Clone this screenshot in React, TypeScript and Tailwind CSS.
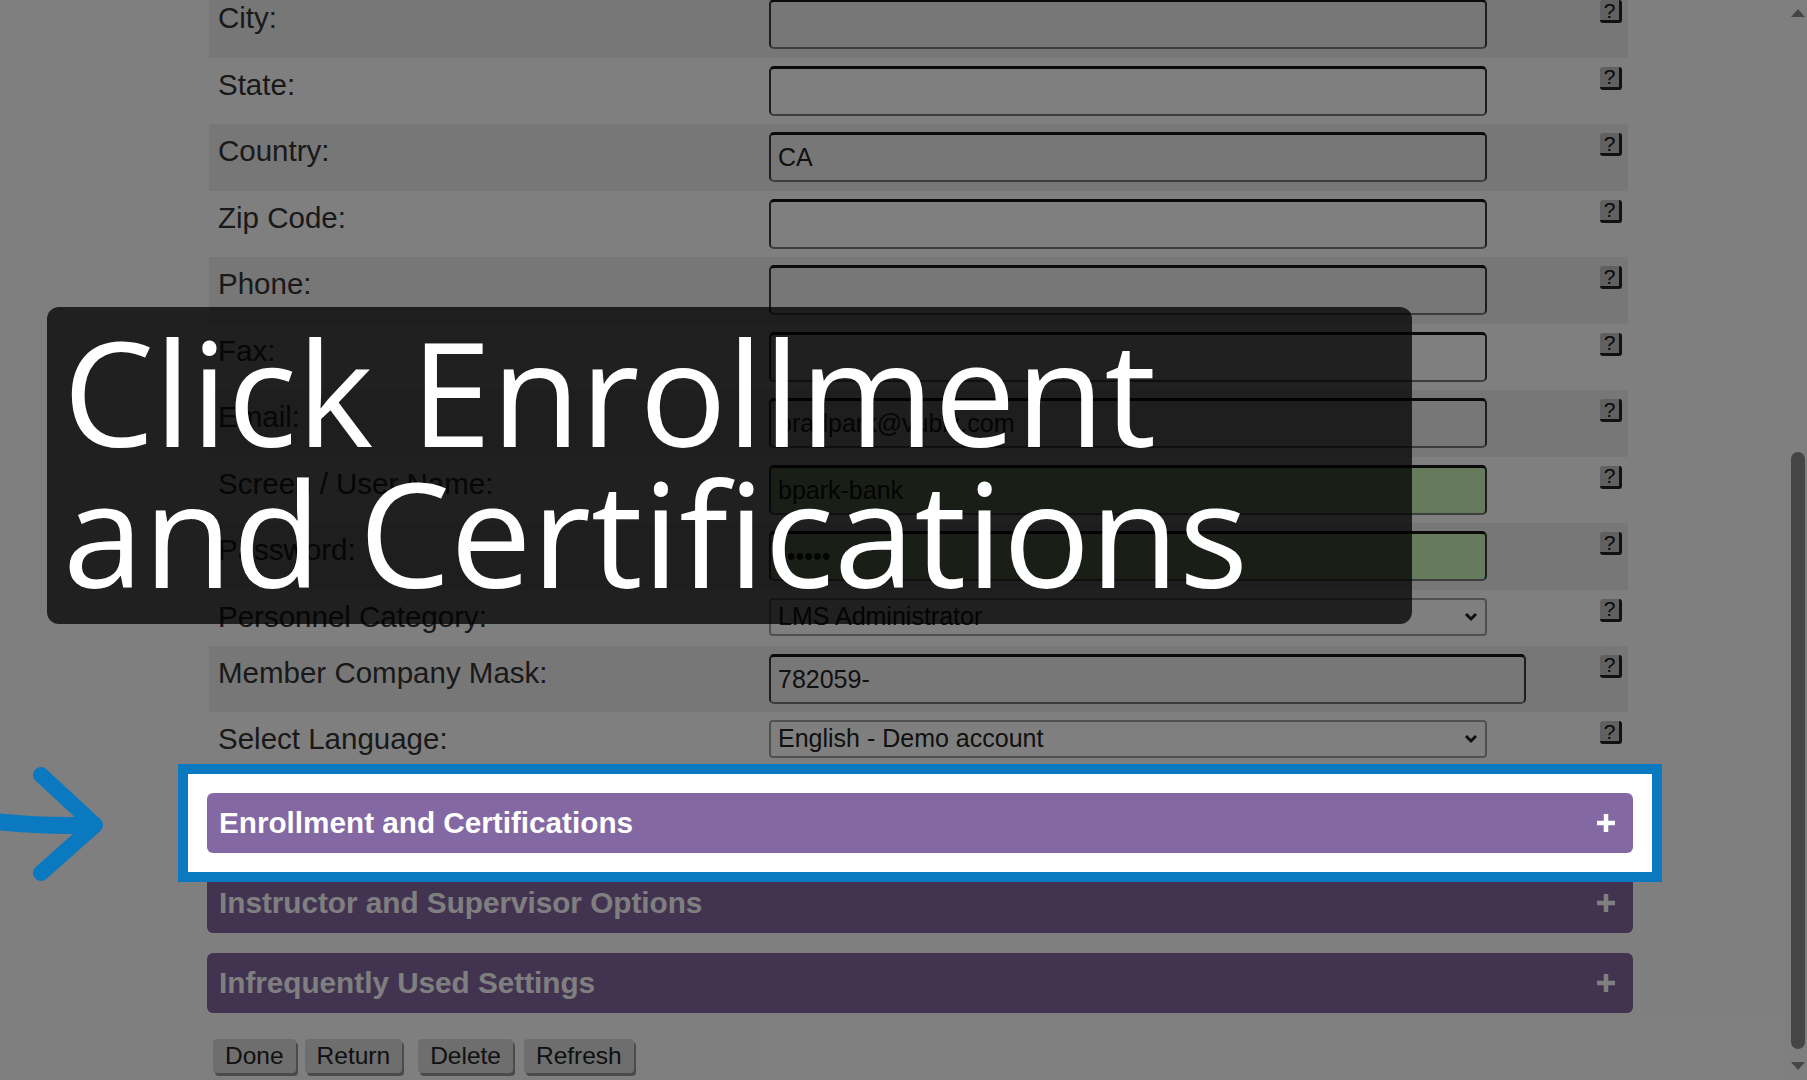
import React from 'react';

type Field = {
    label: string;
    value?: string;
    select?: string;
    green?: boolean;
    password?: boolean;
    wide?: boolean;
};

const fields: Field[] = [
    { label: 'City:', value: '' },
    { label: 'State:', value: '' },
    { label: 'Country:', value: 'CA' },
    { label: 'Zip Code:', value: '' },
    { label: 'Phone:', value: '' },
    { label: 'Fax:', value: '' },
    { label: 'Email:', value: 'bradpark@vubiz.com' },
    { label: 'Screen / User Name:', value: 'bpark-bank', green: true },
    { label: 'Password:', value: 'secret', green: true, password: true },
    { label: 'Personnel Category:', select: 'LMS Administrator' },
    { label: 'Member Company Mask:', value: '782059-', wide: true },
    { label: 'Select Language:', select: 'English - Demo account' },
];

const sections = ['Enrollment and Certifications', 'Instructor and Supervisor Options', 'Infrequently Used Settings'];

function HelpIcon() {
    return (
        <span className="flex h-[23px] w-[22px] items-center justify-center rounded-[3px] border-r-[3px] border-b-[3px] border-[#222] bg-[#c2c2c2] text-[21px] leading-none text-[#111]">
            ?
        </span>
    );
}

function Plus() {
    return (
        <svg width="20" height="20" viewBox="0 0 20 20" className="shrink-0">
            <path d="M10 1v18M1 10h18" stroke="#fff" strokeWidth="4.5" />
        </svg>
    );
}

function SelectBox({ text }: { text: string }) {
    return (
        <div className="flex h-[38px] w-[718px] items-center justify-between rounded-[4px] border-2 border-[#a0a0a0] pl-[7px] pr-[7px] text-[25px] text-[#222]">
            <span>{text}</span>
            <svg width="14" height="10" viewBox="0 0 14 10">
                <path d="M2 2l5 5 5-5" fill="none" stroke="#222" strokeWidth="3" />
            </svg>
        </div>
    );
}

function FieldRow({ field, index }: { field: Field; index: number }) {
    const striped = index % 2 === 0 ? 'bg-[#eeeeee]' : 'bg-white';
    const height = field.select ? 'h-[56px]' : 'h-[66.5px]';
    return (
        <div className={`flex ${height} ${striped}`}>
            <div className="w-[560px] shrink-0 pl-[9px] pt-[5px] text-[29.5px] text-[#333]">{field.label}</div>
            <div className="flex-1 pt-[8px]">
                {field.select ? (
                    <SelectBox text={field.select} />
                ) : (
                    <input
                        type={field.password ? 'password' : 'text'}
                        defaultValue={field.value}
                        readOnly
                        className={`h-[50px] ${field.wide ? 'w-[757px]' : 'w-[718px]'} rounded-[5px] border-2 border-t-[3px] border-[#3a3a3a] border-t-[#141414] border-b-[#7a7a7a] px-[7px] text-[25px] text-[#222] outline-none ${field.green ? 'bg-[#ccf4b8]' : 'bg-transparent'}`}
                    />
                )}
            </div>
            <div className="w-[28px] shrink-0 pt-[9px]">
                <HelpIcon />
            </div>
        </div>
    );
}

function SectionBar({ title }: { title: string }) {
    return (
        <div className="flex h-[60px] items-center justify-between rounded-[6px] bg-[#8468a3] pl-[12px] pr-[17px] text-[29.7px] font-bold text-white">
            <span>{title}</span>
            <Plus />
        </div>
    );
}

export default function App() {
    return (
        <div className="relative flex h-[1080px] w-[1807px] overflow-hidden bg-white font-['Liberation_Sans',Arial,sans-serif]">
            <main className="flex-1">
                <div className="-mt-[9px] ml-[209px] w-[1419px]">
                    {fields.map((f, i) => (
                        <FieldRow key={f.label} field={f} index={i} />
                    ))}

                    <div className="mt-[25px] -ml-[2px] flex w-[1426px] flex-col gap-[20px]">
                        {/* the first section is lifted above the dimmed layer */}
                        <div className="relative z-20 -m-[29px] border-[10px] border-[#0b79c0] bg-white p-[19px]">
                            <SectionBar title={sections[0]} />
                        </div>
                        <SectionBar title={sections[1]} />
                        <SectionBar title={sections[2]} />
                    </div>

                    <div className="mt-[26px] ml-[4px] flex text-[24.5px] text-[#222]">
                        <button className="h-[34px] rounded-[4px] bg-[#dcdcdc] px-[12px] leading-none shadow-[2px_3px_0_#969696]">Done</button>
                        <button className="ml-[9px] h-[34px] rounded-[4px] bg-[#dcdcdc] px-[12px] leading-none shadow-[2px_3px_0_#969696]">Return</button>
                        <button className="ml-[16px] h-[34px] rounded-[4px] bg-[#dcdcdc] px-[12px] leading-none shadow-[2px_3px_0_#969696]">Delete</button>
                        <button className="ml-[11px] h-[34px] rounded-[4px] bg-[#dcdcdc] px-[12px] leading-none shadow-[2px_3px_0_#969696]">Refresh</button>
                    </div>
                </div>
            </main>

            {/* window scrollbar */}
            <aside className="flex w-[21px] flex-col items-center pl-[2px]">
                <svg width="14" height="8" viewBox="0 0 14 8" className="mt-[9px]">
                    <path d="M7 0L14 8H0z" fill="#8a8a8a" />
                </svg>
                <div className="mt-[435px] h-[597px] w-[14px] rounded-full bg-[#8a8a8a]" />
                <svg width="14" height="8" viewBox="0 0 14 8" className="mt-[13px]">
                    <path d="M0 0H14L7 8z" fill="#8a8a8a" />
                </svg>
            </aside>

            {/* dim layer */}
            <div className="absolute inset-0 z-10 bg-black/50" />

            {/* pointer arrow */}
            <svg width="120" height="130" viewBox="0 0 120 130" className="absolute left-0 top-[760px] z-30">
                <path d="M-10 61 Q45 67 94 65" fill="none" stroke="#0b79c0" strokeWidth="17" strokeLinecap="round" />
                <path d="M41 15L95 65L41 113" fill="none" stroke="#0b79c0" strokeWidth="16" strokeLinecap="round" strokeLinejoin="round" />
            </svg>

            {/* caption */}
            <div className="absolute left-[47px] top-[307px] z-30 h-[317px] w-[1365px] rounded-[12px] bg-black/75 pl-[16px] pt-[13px] font-['Open_Sans',sans-serif] text-[145px] leading-[141px] text-white">
                <div>Click Enrollment</div>
                <div>and Certifications</div>
            </div>
        </div>
    );
}
